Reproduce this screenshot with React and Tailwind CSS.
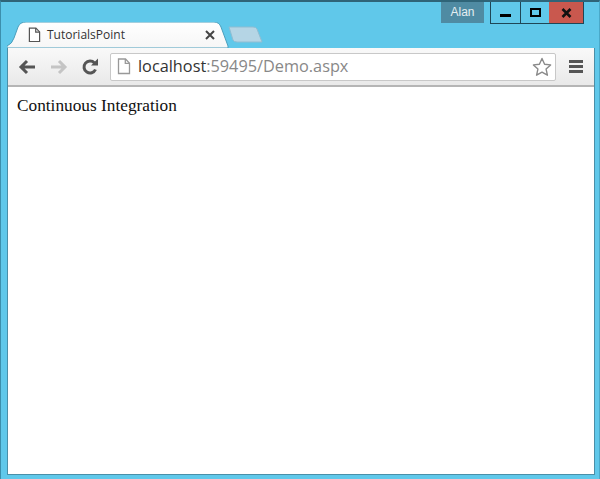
import React from 'react';

const FileIcon = ({ className }) => (
  <svg viewBox="0 0 14 17" className={className} fill="none">
    <path d="M1.5 1h7l4 4.2v10.3h-11z" fill="#fff" stroke="currentColor" strokeWidth="1.3" />
    <path d="M8.3 1v4.4h4.2" stroke="currentColor" strokeWidth="1.3" />
  </svg>
);

const App = () => {
  return (
    <div className="w-[600px] h-[479px] bg-[#60c8ea] border-t-2 border-l border-r border-t-[#2f6478] border-l-[#3c8fac] border-r-[#4aa9c9] flex flex-col overflow-hidden font-['Liberation_Sans',sans-serif]">
      {/* title bar */}
      <div className="h-[20px] flex justify-end items-start pr-[15px] shrink-0">
        <div className="w-[43px] h-[21px] bg-[#4f8ba3] text-[#e4eef2] text-[12px] leading-[20px] text-center mr-[6px]">
          Alan
        </div>
        <div className="flex h-[22px] border border-t-0 border-[#1f4656]">
          <div className="w-[30px] border-r border-[#1f4656] flex items-center justify-center pt-[5px]">
            <div className="w-[11px] h-[3px] bg-black" />
          </div>
          <div className="w-[28px] flex items-center justify-center">
            <div className="w-[11px] h-[9px] border-2 border-black" />
          </div>
          <div className="w-[34px] bg-[#c9584e] flex items-center justify-center">
            <svg viewBox="0 0 11 10" className="w-[11px] h-[10px]">
              <path d="M1.5 1l8 8M9.5 1l-8 8" stroke="#111" strokeWidth="2.6" />
            </svg>
          </div>
        </div>
      </div>

      {/* tab strip */}
      <div className="h-[26px] flex items-end pl-[6px] shrink-0">
        <div className="relative w-[222px] h-[26px] flex items-center pl-[21px] pr-[14px]">
          <svg viewBox="0 0 222 26" className="absolute inset-0 w-[222px] h-[26px]">
            <path d="M0 26L0 24Q5 22 7 16L11 5Q13 0 19 0H207Q212 0 214 5L221 24V26Z" fill="url(#tabfill)" stroke="#4b9fbd" strokeWidth="1" />
            <defs>
              <linearGradient id="tabfill" x1="0" y1="0" x2="0" y2="1">
                <stop offset="0" stopColor="#ffffff" />
                <stop offset="1" stopColor="#f6f6f6" />
              </linearGradient>
            </defs>
          </svg>
          <FileIcon className="relative w-[13px] h-[16px] text-[#555] shrink-0" />
          <span className="relative ml-[6px] text-[12px] text-[#333] font-['Open_Sans',sans-serif] flex-1">TutorialsPoint</span>
          <svg viewBox="0 0 10 10" className="relative w-[10px] h-[10px]">
            <path d="M1 1l8 8M9 1l-8 8" stroke="#444" strokeWidth="2" />
          </svg>
        </div>
        <svg viewBox="0 0 36 18" className="w-[36px] h-[18px] mb-[4px] -ml-[1px]">
          <path d="M1 1H25Q28 1 29 3L34 16H9Q6 16 5 14Z" fill="#b5d5e5" stroke="#8fbdd2" strokeWidth="1" />
        </svg>
      </div>

      {/* browser page area */}
      <div className="flex-1 ml-[6px] mr-[4px] mb-[4px] flex flex-col border border-t-0 border-[#4a8fa8] bg-white min-h-0">
        <div className="h-[39px] shrink-0 bg-gradient-to-b from-[#f9f9f9] to-[#e9e9e9] border-b-2 border-[#b5b5b5] flex items-center pl-[10px] pr-[11px]">
          <svg viewBox="0 0 18 16" className="w-[18px] h-[16px] text-[#555]">
            <path d="M17 8H4M9 2L3 8l6 6" fill="none" stroke="currentColor" strokeWidth="3" />
          </svg>
          <svg viewBox="0 0 18 16" className="w-[18px] h-[16px] ml-[14px] text-[#c4c4c4]">
            <path d="M1 8h13M9 2l6 6-6 6" fill="none" stroke="currentColor" strokeWidth="3" />
          </svg>
          <svg viewBox="0 0 18 18" className="w-[18px] h-[18px] ml-[13px] text-[#555]">
            <path d="M14.5 11.5A6 6 0 1 1 13.5 5" fill="none" stroke="currentColor" strokeWidth="3" />
            <path d="M10 7.5h7v-7z" fill="currentColor" />
          </svg>
          <div className="ml-[11px] flex-1 h-[28px] bg-white border border-[#c8c8c8] rounded-[2px] flex items-center pl-[6px] pr-[3px]">
            <FileIcon className="w-[14px] h-[17px] text-[#999] shrink-0" />
            <span className="ml-[7px] text-[16.3px] text-[#888] font-['Open_Sans',sans-serif] flex-1 leading-none">
              <span className="text-[#333]">localhost</span>:59495/Demo.aspx
            </span>
            <svg viewBox="0 0 20 20" className="w-[20px] h-[20px]">
              <path d="M10 1.5l2.6 5.7 6 .7-4.5 4.2 1.3 6.1L10 15.2l-5.4 3 1.3-6.1L1.4 7.9l6-.7z" fill="#fff" stroke="#8a8a8a" strokeWidth="1.4" strokeLinejoin="round" />
            </svg>
          </div>
          <div className="ml-[13px] w-[14px] flex flex-col gap-[2px]">
            <div className="h-[3px] bg-[#555]" />
            <div className="h-[3px] bg-[#555]" />
            <div className="h-[3px] bg-[#555]" />
          </div>
        </div>
        <div className="flex-1 bg-white pl-[9px] pt-[9px] text-[17.3px] leading-[20px] text-[#111] font-['Liberation_Serif',serif]">
          Continuous Integration
        </div>
      </div>
    </div>
  );
};

export default App;
